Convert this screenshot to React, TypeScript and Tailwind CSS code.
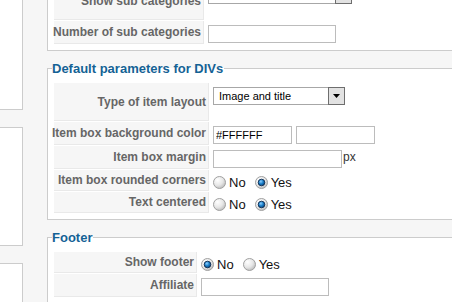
import { useId } from "react";
import type { ReactNode } from "react";

function Radio({ checked }: { checked?: boolean }) {
  const id = useId().replace(/:/g, "");
  return (
    <svg width="13" height="13" viewBox="0 0 13 13" className="shrink-0">
      <defs>
        <radialGradient id={`ring${id}`} cx="0.35" cy="0.3" r="0.8">
          <stop offset="0" stopColor="#ffffff" />
          <stop offset="0.55" stopColor="#e6e6e6" />
          <stop offset="1" stopColor="#b4b4b4" />
        </radialGradient>
        <radialGradient id={`dot${id}`} cx="0.4" cy="0.35" r="0.7">
          <stop offset="0" stopColor="#8fd0ff" />
          <stop offset="0.5" stopColor="#1a7fc9" />
          <stop offset="1" stopColor="#0b3f75" />
        </radialGradient>
      </defs>
      <circle cx="6.5" cy="6.5" r="6" fill={`url(#ring${id})`} stroke="#a0a0a0" strokeWidth="1" />
      {checked && <circle cx="6.5" cy="6.5" r="3.3" fill={`url(#dot${id})`} stroke="#0d2a4f" strokeWidth="0.9" />}
    </svg>
  );
}

function YesNo({ yes }: { yes: boolean }) {
  return (
    <div className="mt-[2px] flex h-[13px] items-center text-[13px] text-[#111]">
      <Radio checked={!yes} />
      <span className="ml-[3px]">No</span>
      <span className="ml-[9px]">
        <Radio checked={yes} />
      </span>
      <span className="ml-[3px]">Yes</span>
    </div>
  );
}

function Select({ w, value }: { w: string; value: string }) {
  return (
    <div className={`${w} flex h-[18px] items-center border border-[#a7a7a7] bg-white`}>
      <span className="flex-1 pl-[5px] text-[11px] leading-[16px] text-black">{value}</span>
      <div className="-my-[1px] -mr-[1px] flex h-[18px] w-[17px] items-center justify-center border border-[#6e6e6e] bg-[#e2e2e2]">
        <svg width="7" height="4" viewBox="0 0 7 4">
          <path d="M0 0h7L3.5 4z" fill="#000" />
        </svg>
      </div>
    </div>
  );
}

function Input({ w, value = "", extra = "" }: { w: string; value?: string; extra?: string }) {
  return (
    <input
      readOnly
      defaultValue={value}
      className={`${w} ${extra} h-[18px] border border-[#bcbcbc] bg-white px-[2px] text-[11px] text-black outline-none`}
    />
  );
}

function Row({ label, lw, h, children }: { label: string; lw: string; h: string; children: ReactNode }) {
  return (
    <div className={`flex gap-[1px] ${h}`}>
      <div
        className={`${lw} flex shrink-0 items-center justify-end whitespace-nowrap border-b border-r border-[#e9e9e9] bg-[#f6f6f6] pr-[2px] text-[12px] font-bold text-[#666]`}
      >
        {label}
      </div>
      <div className="flex flex-1 items-start bg-white pl-[3px] pt-[4px]">{children}</div>
    </div>
  );
}

function Fieldset({ legend, children }: { legend: string; children: ReactNode }) {
  return (
    <fieldset className="mt-[10px] border border-[#ccc] bg-white px-[6px] pb-[6px] pt-[7px]">
      <legend className="-ml-[2px] pr-[1px] text-[13px] font-bold leading-[15px] text-[#146295]">{legend}</legend>
      <div className="flex flex-col gap-[1px]">{children}</div>
    </fieldset>
  );
}

export default function App() {
  return (
    <div className="flex h-[302px] w-[452px] items-start overflow-hidden bg-[#f6f6f6] font-['Liberation_Sans',Arial,sans-serif]">
      {/* left column, mostly off screen */}
      <div className="flex w-[23px] shrink-0 flex-col gap-[17px]">
        <div className="h-[110px] border-b border-r border-[#ccc] bg-white" />
        <div className="h-[119px] border-y border-r border-[#ccc] bg-white" />
        <div className="h-[60px] border-t border-r border-[#ccc] bg-white" />
      </div>

      <div className="-mt-[18px] ml-[24px] w-[460px] shrink-0">
        {/* tail of the category fieldset */}
        <div className="border-x border-b border-[#ccc] bg-white px-[6px] pb-[6px]">
          <div className="flex flex-col gap-[1px]">
            <Row label="Show sub categories" lw="w-[150px]" h="h-[38px]">
              <Select w="w-[144px]" value="" />
            </Row>
            <Row label="Number of sub categories" lw="w-[150px]" h="h-[23px]">
              <Input w="w-[128px]" />
            </Row>
          </div>
        </div>

        <Fieldset legend="Default parameters for DIVs">
          <Row label="Type of item layout" lw="w-[155px]" h="h-[38px]">
            <Select w="w-[132px]" value="Image and title" />
          </Row>
          <Row label="Item box background color" lw="w-[155px]" h="h-[23px]">
            <Input w="w-[79px]" value="#FFFFFF" />
            <Input w="w-[79px]" extra="ml-[4px]" />
          </Row>
          <Row label="Item box margin" lw="w-[155px]" h="h-[23px]">
            <Input w="w-[129px]" />
            <span className="ml-[1px] text-[12px] leading-[14px] text-[#333]">px</span>
          </Row>
          <Row label="Item box rounded corners" lw="w-[155px]" h="h-[21px]">
            <YesNo yes />
          </Row>
          <Row label="Text centered" lw="w-[155px]" h="h-[21px]">
            <YesNo yes />
          </Row>
        </Fieldset>

        <Fieldset legend="Footer">
          <Row label="Show footer" lw="w-[143px]" h="h-[21px]">
            <YesNo yes={false} />
          </Row>
          <Row label="Affiliate" lw="w-[143px]" h="h-[23px]">
            <Input w="w-[128px]" />
          </Row>
        </Fieldset>
      </div>
    </div>
  );
}
